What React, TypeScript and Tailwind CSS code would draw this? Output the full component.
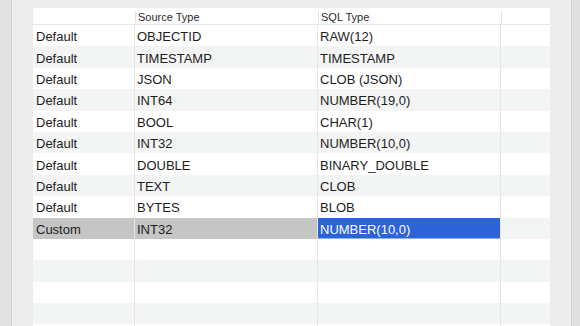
import { clsx } from 'clsx'

interface Mapping {
  kind: string
  source: string
  sql: string
}

const mappings: Mapping[] = [
  { kind: 'Default', source: 'OBJECTID', sql: 'RAW(12)' },
  { kind: 'Default', source: 'TIMESTAMP', sql: 'TIMESTAMP' },
  { kind: 'Default', source: 'JSON', sql: 'CLOB (JSON)' },
  { kind: 'Default', source: 'INT64', sql: 'NUMBER(19,0)' },
  { kind: 'Default', source: 'BOOL', sql: 'CHAR(1)' },
  { kind: 'Default', source: 'INT32', sql: 'NUMBER(10,0)' },
  { kind: 'Default', source: 'DOUBLE', sql: 'BINARY_DOUBLE' },
  { kind: 'Default', source: 'TEXT', sql: 'CLOB' },
  { kind: 'Default', source: 'BYTES', sql: 'BLOB' },
  { kind: 'Custom', source: 'INT32', sql: 'NUMBER(10,0)' },
]

const SELECTED = 9
const EMPTY_ROWS = 6

const cols = 'grid grid-cols-[102px_183px_183px_49px]'

function HeaderCell({ label, divider }: { label?: string; divider?: boolean }) {
  return (
    <div className="flex h-full items-center">
      {divider && <span className="h-[12px] w-px bg-[#e2e2e2]" />}
      {label && <span className="pl-[2px] pt-[1px] text-[11px] text-[#2b2b2b]">{label}</span>}
    </div>
  )
}

export default function App() {
  const rows: (Mapping | null)[] = [...mappings, ...Array(EMPTY_ROWS).fill(null)]

  return (
    <div
      className="flex h-[326px] w-[580px] overflow-hidden bg-[#ececec]"
      style={{ fontFamily: '"Liberation Sans", Arial, sans-serif' }}
    >
      {/* sidebar edge */}
      <div className="w-[12px] shrink-0 border-r border-[#d2d2d2] bg-[#e2e2e2]" />

      <div className="flex-1 px-[21px] pt-[8px]">
        <div className="h-full overflow-hidden bg-white">
          {/* header */}
          <div className={clsx(cols, 'h-[17px] border-b border-[#e6e6e6]')}>
            <HeaderCell />
            <HeaderCell label="Source Type" divider />
            <HeaderCell label="SQL Type" divider />
            <HeaderCell divider />
          </div>

          {rows.map((row, i) => {
            const selected = i === SELECTED
            const striped = i % 2 === 1
            return (
              <div
                key={i}
                className={clsx(cols, 'h-[21.4px] text-[13px] leading-none text-[#1d1d1d]', striped ? 'bg-[#f3f4f4]' : 'bg-white')}
              >
                <div className={clsx('flex items-center border-r border-[#e6e6e6] pl-[3px] pt-[2px]', selected && 'bg-[#c5c5c5] border-[#c5c5c5]')}>
                  {row?.kind}
                </div>
                <div className={clsx('flex items-center border-r border-[#e6e6e6] pl-[2px] pt-[2px]', selected && 'bg-[#c5c5c5]')}>
                  {row?.source}
                </div>
                <div
                  className={clsx(
                    'flex items-center border-r border-[#e6e6e6] pl-[2px] pt-[2px]',
                    selected && 'bg-[#2c63d8] text-white shadow-[inset_0_-1px_0_#8fb0ee]'
                  )}
                >
                  {row?.sql}
                </div>
                <div />
              </div>
            )
          })}
        </div>
      </div>

      {/* window edge */}
      <div className="w-[9px] shrink-0 border-l border-[#d0d0d0] bg-[#e0e0e0]" />
    </div>
  )
}
